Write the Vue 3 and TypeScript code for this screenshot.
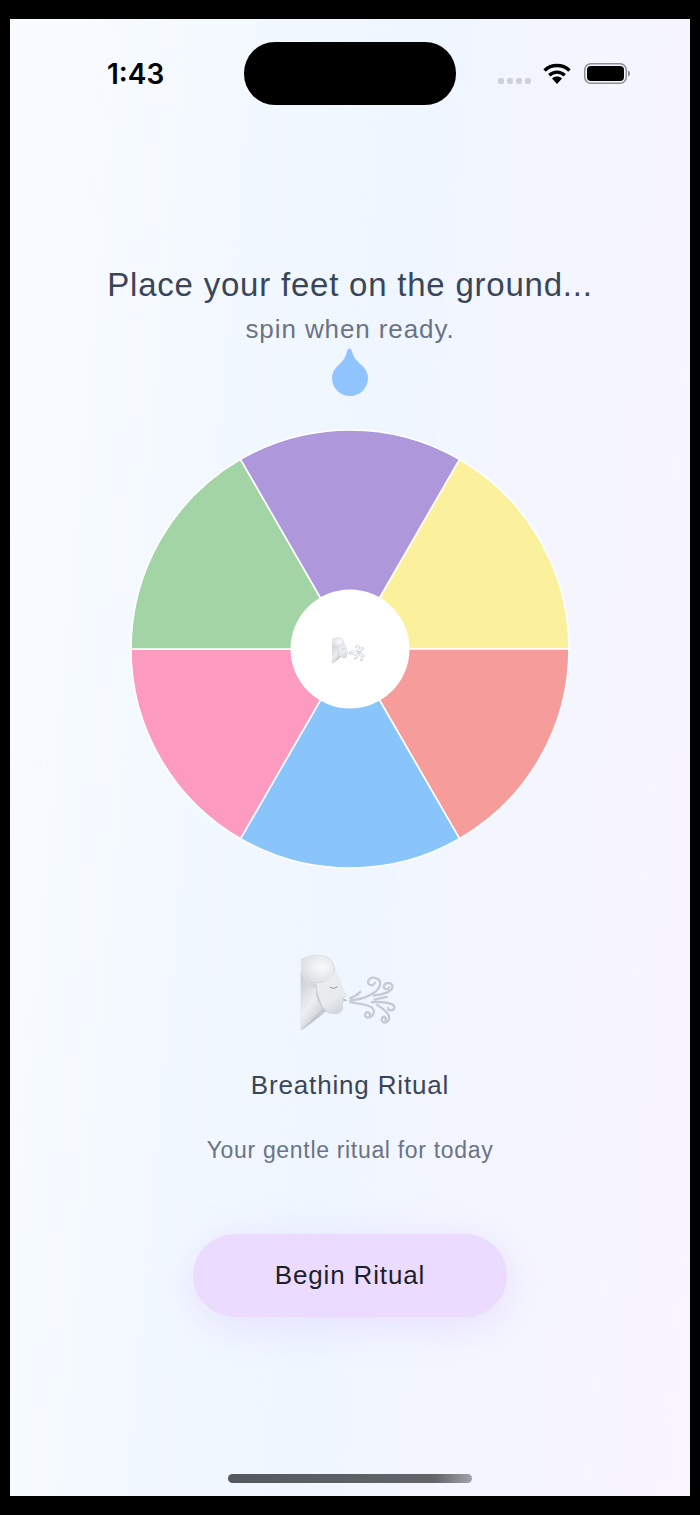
<script setup lang="ts">
interface Slice { color: string; d: string }
const cx = 220, cy = 220, r = 219
const colors = ['#FBF09C', '#F69C9A', '#89C4FA', '#FC9ABF', '#A2D4A6', '#AE98DB']
const slices: Slice[] = colors.map((color, i) => {
  const a0 = ((-60 + i * 60) * Math.PI) / 180
  const a1 = ((i * 60) * Math.PI) / 180
  const x0 = cx + r * Math.cos(a0), y0 = cy + r * Math.sin(a0)
  const x1 = cx + r * Math.cos(a1), y1 = cy + r * Math.sin(a1)
  return { color, d: `M${cx} ${cy}L${x0.toFixed(2)} ${y0.toFixed(2)}A${r} ${r} 0 0 1 ${x1.toFixed(2)} ${y1.toFixed(2)}Z` }
})
</script>

<template>
  <div class="frame">
    <svg class="defs" width="0" height="0" aria-hidden="true">
      <defs>
        <linearGradient id="headGrad" x1="0" y1="0" x2="0.4" y2="1">
          <stop offset="0" stop-color="#e6e8ec" />
          <stop offset="1" stop-color="#bcc0c8" />
        </linearGradient>
        <radialGradient id="hairGrad" cx="0.62" cy="0.42" r="0.72">
          <stop offset="0" stop-color="#fafafb" />
          <stop offset="1" stop-color="#d9dbe0" />
        </radialGradient>
        <linearGradient id="faceGrad" x1="0.2" y1="0" x2="0.6" y2="1">
          <stop offset="0" stop-color="#eceef1" />
          <stop offset="0.7" stop-color="#e8eaee" />
          <stop offset="1" stop-color="#d4d7dd" />
        </linearGradient>
        <linearGradient id="lobeGrad" x1="0.2" y1="0" x2="0.7" y2="1">
          <stop offset="0" stop-color="#c9ccd3" />
          <stop offset="0.55" stop-color="#eceef1" />
          <stop offset="1" stop-color="#c2c5cd" />
        </linearGradient>
        <symbol id="windFace" viewBox="58 70 286 230">
          <path d="M60 84C78 74 108 70 128 74C150 80 162 100 163 118C172 134 180 152 184 168C187 178 196 188 196 194C194 198 189 200 187 203L190 210L185 217C188 230 184 244 172 248C160 251 146 248 134 242C112 262 86 282 62 298L60 296Z" fill="url(#headGrad)" />
          <path d="M108 156C130 160 153 146 163 118C172 134 180 152 184 168C187 178 196 188 196 194C194 198 189 200 187 203L190 210L185 217C188 230 184 244 172 248C156 251 138 246 126 228C114 206 108 180 108 156Z" fill="url(#faceGrad)" />
          <path d="M60 120C66 150 84 170 106 172C102 196 112 216 126 232C104 254 80 278 62 296L60 296Z" fill="url(#lobeGrad)" />
          <path d="M62 86C80 76 108 72 128 76C148 82 162 104 160 126C150 148 124 158 100 154C80 148 62 118 62 86Z" fill="url(#hairGrad)" />
          <path d="M148 170C155 174 163 173 169 168" fill="none" stroke="#7d818a" stroke-width="2.4" stroke-linecap="round" />
          <path d="M187 203L200 208L188 212Z" fill="#b8bcc5" />
          <g fill="none" stroke="#c6cad4" stroke-width="7" stroke-linecap="round">
            <path d="M208 201C220 198 230 191 238 183" />
            <path d="M208 209C245 205 290 190 297 162C300 142 272 134 262 148C256 162 274 170 282 156" />
            <path d="M278 194C305 192 335 182 334 166C330 153 312 154 308 166C308 176 320 178 324 170" />
            <path d="M280 206L317 198" />
            <path d="M272 214C300 212 340 215 340 230C338 241 322 240 320 231" />
            <path d="M208 214C240 220 290 222 276 250C268 264 250 262 252 250C255 240 268 244 266 252" />
            <path d="M288 222C305 232 332 250 322 268C312 282 296 272 304 260C310 254 318 262 312 268" />
          </g>
        </symbol>
      </defs>
    </svg>

    <main class="screen">
      <header class="status">
        <div class="status-left"><span class="time">1:43</span></div>
        <div class="island"></div>
        <div class="status-right">
          <div class="signal"><i></i><i></i><i></i><i></i></div>
          <svg class="wifi" width="28" height="21" viewBox="0 0 28 21">
            <path d="M1.5 7.5C8.5 .9 19.5 .9 26.5 7.5" fill="none" stroke="#000" stroke-width="3.4" />
            <path d="M6.3 12.2C10.8 8.1 17.2 8.1 21.7 12.2" fill="none" stroke="#000" stroke-width="3.4" />
            <path d="M9 15.4C12 13 16 13 19 15.4L14 21Z" fill="#000" />
          </svg>
          <svg class="battery" width="46" height="21" viewBox="0 0 46 21">
            <rect x=".75" y=".75" width="41.5" height="19.5" rx="6" fill="none" stroke="#8e8e93" stroke-width="1.5" />
            <rect x="3" y="3" width="37" height="15" rx="4" fill="#000" />
            <path d="M44 7.5C45.5 8 46 9 46 10.5C46 12 45.5 13 44 13.5Z" fill="#8e8e93" />
          </svg>
        </div>
      </header>

      <h1 class="title">Place your feet on the ground...</h1>
      <p class="sub">spin when ready.</p>

      <svg class="drop" width="38" height="50" viewBox="0 0 38 50">
        <path d="M18.5 1.5C20 1.5 20.6 3 21 4.5C22.5 11 27 15 31.5 19C35 22.5 37 26.5 37 31C37 41 29 49 19 49C9 49 1 41 1 31C1 26.5 3 22.5 6.5 19C11 15 14.6 11 16 4.5C16.4 3 17 1.5 18.5 1.5Z" fill="#90C4FF" />
      </svg>

      <div class="wheel">
        <svg width="440" height="440" viewBox="0 0 440 440">
          <path v-for="s in slices" :key="s.color" :d="s.d" :fill="s.color" stroke="#fff" stroke-width="1.6" />
          <circle cx="220" cy="220" r="59.5" fill="#fff" />
        </svg>
        <svg class="wheel-icon" width="33" height="27"><use href="#windFace" /></svg>
      </div>

      <svg class="emoji" width="96" height="77"><use href="#windFace" /></svg>
      <h2 class="name">Breathing Ritual</h2>
      <p class="tagline">Your gentle ritual for today</p>
      <button class="begin" type="button">Begin Ritual</button>

      <div class="home"></div>
    </main>
  </div>
</template>

<style>
html, body { margin: 0; background: #000; }
</style>

<style scoped>
.frame {
  width: 700px;
  height: 1515px;
  box-sizing: border-box;
  padding: 19px 10px;
  background: #000;
  font-family: "Liberation Sans", Arial, sans-serif;
}
.defs { position: absolute; }
.screen {
  position: relative;
  height: 1477px;
  display: flex;
  flex-direction: column;
  align-items: center;
  background: linear-gradient(95deg, #f9fcff 0%, #eff6ff 50%, #faf5ff 100%);
  overflow: hidden;
}
.status {
  align-self: stretch;
  display: grid;
  grid-template-columns: 234px 212px 234px;
  padding-top: 23px;
  height: 62px;
}
.status-left { padding: 2px 0 0 97px; display: flex; align-items: center; }
.time {
  font-family: Inter, sans-serif;
  font-size: 28px;
  font-weight: 600;
  color: #000;
}
.island { background: #000; height: 62.5px; border-radius: 31px; }
.status-right {
  display: flex;
  align-items: flex-start;
  padding: 21px 0 0 42px;
}
.signal { display: flex; gap: 3px; margin-top: 15px; }
.signal i { width: 6px; height: 6px; border-radius: 2px; background: #d0d0d8; }
.wifi { margin-left: 12px; }
.battery { margin-left: 13px; }
.title {
  margin: 161px 0 0;
  font-size: 33px;
  line-height: 40px;
  font-weight: 400;
  letter-spacing: 0.78px;
  color: #3a4658;
}
.sub {
  margin: 8px 0 0;
  font-size: 26px;
  line-height: 32px;
  letter-spacing: 0.9px;
  color: #6b7385;
}
.drop { margin: 2px 1px 0 0; display: block; }
.wheel {
  position: relative;
  margin-top: 32px;
  width: 440px;
  height: 440px;
}
.wheel > svg:first-child { display: block; }
.wheel-icon { position: absolute; left: 202px; top: 208px; }
.emoji { margin: 85px 5px 0 0; display: block; filter: blur(0.35px); }
.name {
  margin: 38px 0 0;
  font-size: 26px;
  line-height: 32px;
  font-weight: 400;
  letter-spacing: 0.83px;
  color: #3a4658;
}
.tagline {
  margin: 35px 0 0;
  font-size: 23px;
  line-height: 28px;
  letter-spacing: 0.68px;
  color: #6b7385;
}
.begin {
  margin-top: 70px;
  width: 314px;
  height: 83px;
  border: 0;
  border-radius: 42px;
  background: #ebdcff;
  box-shadow: 0 8px 40px rgba(200, 170, 255, 0.28);
  font-family: inherit;
  font-size: 26px;
  letter-spacing: 0.85px;
  color: #1f1f2b;
}
.home {
  position: absolute;
  left: 218px;
  bottom: 13px;
  width: 244px;
  height: 9px;
  border-radius: 5px;
  background: linear-gradient(90deg, #55585c 0%, #62666b 85%, #a0a2a6 100%);
}
</style>
